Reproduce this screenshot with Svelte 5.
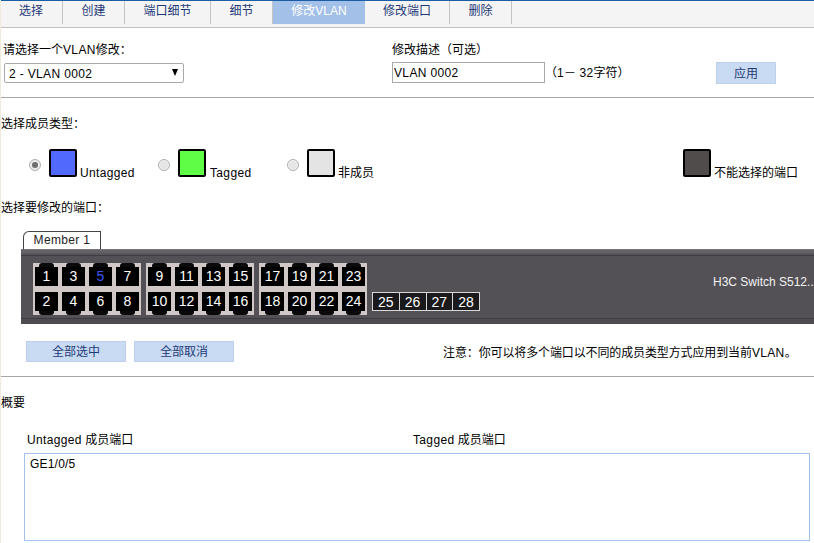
<script>
  const tabs = ['选择', '创建', '端口细节', '细节', '修改VLAN', '修改端口', '删除'];
  const tabW = [63, 62, 86, 62, 92, 85, 62];
  const members = [
    { label: 'Untagged', cls: 'blue', checked: true },
    { label: 'Tagged', cls: 'green', checked: false },
    { label: '非成员', cls: 'grey', checked: false }
  ];
  const groups = [
    { top: [1, 3, 5, 7], bottom: [2, 4, 6, 8] },
    { top: [9, 11, 13, 15], bottom: [10, 12, 14, 16] },
    { top: [17, 19, 21, 23], bottom: [18, 20, 22, 24] }
  ];
  const sfp = [25, 26, 27, 28];
</script>

<div class="page">
  <nav class="tabs">
    {#each tabs as t, i}
      <div class="tab" class:active={i === 4} style="width:{tabW[i]}px">{t}</div>
    {/each}
  </nav>

  <section class="top">
    <div class="field vlan">
      <div class="lbl">请选择一个<span class="lat">VLAN</span>修改：</div>
      <div class="selwrap">
        <select><option>2 - VLAN 0002</option></select>
        <span class="arrow"></span>
      </div>
    </div>
    <div class="field desc">
      <div class="lbl">修改描述（可选）</div>
      <div class="descrow">
        <input value="VLAN 0002" />
        <span class="hint">（<span class="lat">1</span>－ <span class="lat">32</span>字符）</span>
      </div>
    </div>
    <button class="btn apply">应用</button>
  </section>

  <section class="types">
    <div class="heading">选择成员类型：</div>
    <div class="legend">
      {#each members as m}
        <div class="item">
          <span class="radio" class:on={m.checked}></span>
          <span class="swatch {m.cls}"></span>
          <span class="itemlbl" class:lat={m.cls !== 'grey'}>{m.label}</span>
        </div>
      {/each}
      <div class="item last">
        <span class="swatch dark"></span>
        <span class="itemlbl">不能选择的端口</span>
      </div>
    </div>
    <div class="heading second">选择要修改的端口：</div>

    <div class="devtab">Member 1</div>
    <div class="device">
      <div class="panel">
        {#each groups as g}
          <div class="group">
            {#each g.top as n}
              <div class="port up" class:sel={n === 5}>{n}</div>
            {/each}
            {#each g.bottom as n}
              <div class="port down">{n}</div>
            {/each}
          </div>
        {/each}
        <div class="sfps">
          {#each sfp as n}
            <div class="sfp">{n}</div>
          {/each}
        </div>
        <div class="model">H3C Switch S512..</div>
      </div>
    </div>

    <div class="actions">
      <button class="btn">全部选中</button>
      <button class="btn">全部取消</button>
      <div class="note">注意：你可以将多个端口以不同的成员类型方式应用到当前<span class="lat">VLAN</span>。</div>
    </div>
  </section>

  <section class="summary">
    <div class="heading">概要</div>
    <div class="cols">
      <div class="col1"><span class="lat">Untagged</span> 成员端口</div>
      <div><span class="lat">Tagged</span> 成员端口</div>
    </div>
    <div class="members-box">GE1/0/5</div>
  </section>
</div>

<style>
  :global(body) {
    margin: 0;
    background: #fff;
    overflow: hidden;
  }
  .page {
    width: 814px;
    height: 543px;
    box-sizing: border-box;
    overflow: hidden;
    border-left: 1px solid #efeadb;
    font: 12px/14px "Liberation Sans", "Noto Sans CJK SC", sans-serif;
    color: #000;
  }
  .lat {
    letter-spacing: 0.35px;
  }
  .tabs {
    display: flex;
    height: 26px;
    margin-left: -1px;
    background: #f4f4f4;
    border-top: 1px solid #1b5ea6;
    border-bottom: 1px solid #c2c2c2;
  }
  .tab {
    box-sizing: border-box;
    height: 23px;
    line-height: 20px;
    text-align: center;
    color: #1f3a78;
    border-right: 1px solid #c4c4c4;
  }
  .tab.active {
    background: #a2c0e8;
    color: #fff;
    border-right: 0;
  }
  .top {
    display: flex;
    box-sizing: border-box;
    height: 70px;
    padding-top: 14px;
    padding-left: 3px;
    margin-left: -1px;
    border-bottom: 1px solid #a6a6a6;
  }
  .lbl {
    height: 20px;
    line-height: 16px;
  }
  .vlan {
    width: 388px;
    padding-left: 1px;
  }
  .vlan .lbl {
    margin-left: -1px;
  }
  .selwrap {
    position: relative;
    width: 180px;
    height: 20px;
    margin-top: 1px;
  }
  select {
    appearance: none;
    width: 180px;
    height: 20px;
    box-sizing: border-box;
    border: 1px solid #a9a9a9;
    border-radius: 2px;
    background: #fff;
    padding: 1px 0 0 4px;
    font: inherit;
    color: #000;
    letter-spacing: 0.35px;
  }
  .arrow {
    position: absolute;
    right: 6px;
    top: 6px;
    width: 0;
    height: 0;
    border-left: 3.5px solid transparent;
    border-right: 3.5px solid transparent;
    border-top: 7px solid #000;
  }
  .desc {
    width: 324px;
  }
  .descrow {
    display: flex;
    align-items: center;
  }
  input {
    width: 153px;
    height: 21px;
    box-sizing: border-box;
    border: 1px solid #a9a9a9;
    padding: 1px 0 0 1px;
    font: inherit;
    letter-spacing: 0.35px;
    color: #000;
    outline: none;
  }
  .hint {
    white-space: nowrap;
    padding-top: 1px;
  }
  .btn {
    width: 100px;
    height: 22px;
    box-sizing: border-box;
    border: 1px solid #bcd0ee;
    background: #c9daf3;
    color: #1f3a78;
    font: inherit;
    padding: 1px 0 0;
    border-radius: 0;
  }
  .apply {
    width: 60px;
    margin-top: 20px;
  }
  .types {
    box-sizing: border-box;
    height: 279px;
    margin-left: -1px;
    padding-top: 18px;
    border-bottom: 1px solid #a6a6a6;
  }
  .heading {
    height: 14px;
    line-height: 16px;
    padding-left: 1px;
    white-space: nowrap;
  }
  .legend {
    display: flex;
    margin-top: 19px;
    padding: 0 16px 0 29px;
    height: 30px;
  }
  .item {
    width: 129px;
    display: flex;
    align-items: flex-start;
    flex: none;
  }
  .item.last {
    width: auto;
    margin-left: auto;
  }
  .radio {
    width: 12px;
    height: 12px;
    box-sizing: border-box;
    border-radius: 50%;
    border: 1px solid #b0b0b0;
    background: #e6e6e6;
    margin: 10px 8px 0 0;
    position: relative;
    box-shadow: inset 0 0 0 1px #f2f2f2;
  }
  .radio.on::after {
    content: "";
    position: absolute;
    left: 2px;
    top: 2px;
    width: 6px;
    height: 6px;
    border-radius: 50%;
    background: #6e6e6e;
  }
  .swatch {
    width: 28px;
    height: 28px;
    box-sizing: border-box;
    border: 2px solid #000;
    border-radius: 2px;
    flex: none;
  }
  .blue { background: #5269fe; }
  .green { background: #60fd47; }
  .grey { background: #e4e4e4; }
  .dark { background: #514c4c; }
  .itemlbl {
    margin: 17px 0 0 3px;
    white-space: nowrap;
  }
  .green + .itemlbl {
    margin-left: 4px;
  }
  .second {
    margin-top: 21px;
  }
  .devtab {
    width: 78px;
    height: 18px;
    box-sizing: border-box;
    margin: 17px 0 0 23px;
    border: 1px solid #444;
    border-bottom: 0;
    border-radius: 6px 0 0 0;
    text-align: center;
    line-height: 16px;
    color: #222;
    letter-spacing: 0.35px;
    background: #fff;
  }
  .device {
    margin-left: 21px;
    height: 75px;
    box-sizing: border-box;
    background: #4e4c51;
    border-top: 1px solid #77757a;
    box-shadow: inset 0 3px 0 #646267, inset 0 5px 0 #58565b;
    padding-top: 5px;
    padding-bottom: 5px;
  }
  .panel {
    height: 64px;
    box-sizing: border-box;
    border-top: 1px solid #3e3c41;
    border-bottom: 1px solid #3e3c41;
    background: #535156;
    display: flex;
    align-items: flex-start;
    padding: 7px 0 0 12px;
    gap: 5px;
    position: relative;
  }
  .group {
    width: 108px;
    height: 52px;
    box-sizing: border-box;
    background: #cfc8c6;
    display: grid;
    grid-template-columns: repeat(4, 23px);
    grid-template-rows: 19px 19px;
    column-gap: 4px;
    row-gap: 6px;
    padding: 4px 2px;
  }
  .port {
    position: relative;
    background: #000;
    color: #fff;
    text-align: center;
    line-height: 19px;
    font-size: 14px;
  }
  .port::before {
    content: "";
    position: absolute;
    left: 4px;
    width: 15px;
    height: 4px;
    background: #0a0a0a;
  }
  .port.up::before {
    top: -4px;
    border-radius: 3px 3px 0 0;
  }
  .port.down::before {
    bottom: -4px;
    border-radius: 0 0 3px 3px;
  }
  .port.sel {
    color: #3a55f0;
  }
  .sfps {
    display: flex;
    margin-top: 29px;
    width: 108px;
    height: 19px;
    box-sizing: border-box;
    border: 1px solid #d8d8d8;
    background: #d8d8d8;
    gap: 1px;
  }
  .sfp {
    flex: 1;
    background: #1a191b;
    color: #fff;
    font-size: 14px;
    text-align: center;
    line-height: 18px;
  }
  .model {
    position: absolute;
    left: 692px;
    top: 19px;
    color: #f2f2f2;
    white-space: nowrap;
  }
  .actions {
    display: flex;
    align-items: center;
    gap: 8px;
    margin-top: 17px;
    padding-left: 26px;
  }
  .actions .btn {
    height: 21px;
  }
  .note {
    margin-left: 201px;
    padding-top: 2px;
    white-space: nowrap;
    letter-spacing: -0.12px;
  }
  .summary {
    padding-top: 18px;
    margin-left: -1px;
  }
  .cols {
    display: flex;
    margin-top: 23px;
    padding-left: 27px;
    height: 14px;
    line-height: 16px;
  }
  .col1 {
    width: 386px;
  }
  .members-box {
    width: 786px;
    height: 88px;
    box-sizing: border-box;
    margin: 7px 0 0 24px;
    border: 1px solid #a2c2ea;
    padding: 3px 5px;
    letter-spacing: 0.2px;
  }
</style>
